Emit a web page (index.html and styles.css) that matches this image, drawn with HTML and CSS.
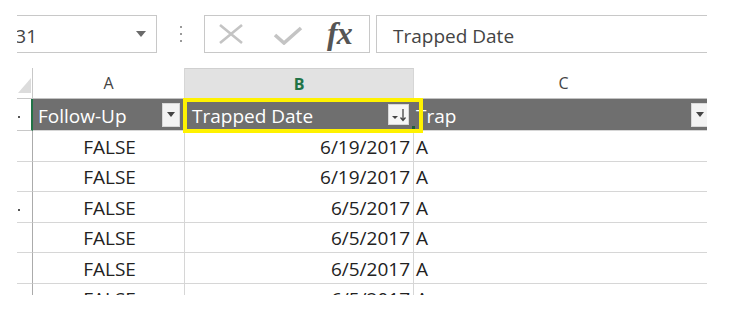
FILE: index.html
```html
<!DOCTYPE html>
<html lang="en">
<head>
    <meta charset="UTF-8">
    <meta name="viewport" content="width=device-width, initial-scale=1.0">
    <title>Trapped Date</title>
    <link rel="stylesheet" href="styles.css">
</head>
<body>
    <div class="shot">
        <!-- formula bar -->
        <div class="bar">
            <div class="namebox">
                <span>B31</span>
                <svg class="caret" width="10" height="6" viewBox="0 0 10 6"><path d="M0 0 L10 0 L5 6 Z" fill="#6a6a6a"/></svg>
            </div>
            <div class="grip"><i></i><i></i><i></i></div>
            <div class="fxbox">
                <svg class="cancel" width="26" height="22" viewBox="0 0 26 22"><path d="M2 2 L24 20 M24 2 L2 20" stroke="#c4c4c4" stroke-width="2.6" fill="none"/></svg>
                <svg class="enter" width="30" height="19" viewBox="0 0 30 19"><path d="M2 9 L11 17 L28 2" stroke="#c4c4c4" stroke-width="3.6" fill="none"/></svg>
                <span class="fx">fx</span>
            </div>
            <div class="formula">Trapped Date</div>
        </div>

        <!-- sheet -->
        <div class="sheet">
            <div class="corner"><svg width="13" height="15" viewBox="0 0 13 15"><path d="M13 0 L13 15 L0 15 Z" fill="#dcdcdc"/></svg></div>
            <div class="colhead">A</div>
            <div class="colhead sel">B</div>
            <div class="colhead">C</div>

            <div class="rowhead active"><i class="speck"></i></div>
            <div class="th pad-a"><span>Follow-Up</span><span class="filter"><svg width="8" height="5" viewBox="0 0 8 5"><path d="M0 0 L8 0 L4 5 Z" fill="#444"/></svg></span></div>
            <div class="th pad-b"><span>Trapped Date</span><span class="filter sort"><svg width="16" height="14" viewBox="0 0 16 14"><path d="M1 8 L7 8 L4 11 Z" fill="#444"/><path d="M12 1 L12 12 M9.5 9.5 L12 12.5 L14.5 9.5" stroke="#444" stroke-width="1.3" fill="none"/></svg></span></div>
            <div class="th pad-c"><span>Trap</span><span class="filter"><svg width="8" height="5" viewBox="0 0 8 5"><path d="M0 0 L8 0 L4 5 Z" fill="#444"/></svg></span></div>

            <div class="rowhead"></div>
            <div class="cell bool">FALSE</div>
            <div class="cell num">6/19/2017</div>
            <div class="cell txt">A</div>

            <div class="rowhead"></div>
            <div class="cell bool">FALSE</div>
            <div class="cell num">6/19/2017</div>
            <div class="cell txt">A</div>

            <div class="rowhead"><i class="speck"></i></div>
            <div class="cell bool">FALSE</div>
            <div class="cell num">6/5/2017</div>
            <div class="cell txt">A</div>

            <div class="rowhead"></div>
            <div class="cell bool">FALSE</div>
            <div class="cell num">6/5/2017</div>
            <div class="cell txt">A</div>

            <div class="rowhead"></div>
            <div class="cell bool">FALSE</div>
            <div class="cell num">6/5/2017</div>
            <div class="cell txt">A</div>

            <div class="rowhead"></div>
            <div class="cell bool">FALSE</div>
            <div class="cell num">6/5/2017</div>
            <div class="cell txt">A</div>

            <!-- yellow highlight over the selected header -->
            <div class="pick"><i class="handle"></i></div>
        </div>
    </div>
</body>
</html>
```

FILE: styles.css
```css
body{margin: 0; background: #fff; font-family: "Open Sans", "Liberation Sans", sans-serif; color: #222;}

.shot{margin: 8px 0 0 17px; width: 690px; height: 287px; overflow: hidden; position: relative;}

/* formula bar */
.bar{display: flex; align-items: center; margin-top: 7px; height: 38px;}
.bar > div{flex-shrink: 0;}
.namebox{box-sizing: border-box; width: 160px; height: 38px; margin-left: -20px; border: 1px solid #c8c8c8; display: flex; align-items: center; justify-content: space-between; padding: 4px 10px 0 5px; font-size: 19px; color: #444;}
.namebox .caret{margin-top: -4px;}
.grip{width: 47px; display: flex; flex-direction: column; align-items: center; gap: 5px;}
.grip i{display: block; width: 2px; height: 2px; background: #9a9a9a;}
.fxbox{box-sizing: border-box; width: 166px; height: 38px; border: 1px solid #c8c8c8; display: flex; align-items: center; padding-left: 13px;}
.fxbox .enter{margin-left: 29px; margin-top: 2px;}
.fxbox .fx{margin-left: 24px; font-family: "Liberation Serif", serif; font-style: italic; font-weight: 700; font-size: 32px; color: #555; line-height: 1; margin-top: -2px; letter-spacing: -1px;}
.formula{box-sizing: border-box; width: 345px; height: 38px; margin-left: 6px; border: 1px solid #c8c8c8; border-right: none; padding: 4px 0 0 16px; font-size: 19px; color: #444; display: flex; align-items: center;}

/* sheet */
.sheet{display: grid; grid-template-columns: 16px 152px 229px 300px; grid-template-rows: 31px 32px repeat(6, 30.5px); width: 697px; margin-top: 15px; position: relative;}
.sheet > div{box-sizing: border-box;}

.corner{display: flex; align-items: flex-end; padding: 0 0 5px 1px; border-right: 1px solid #c8c8c8; border-bottom: 1px solid #c8c8c8;}
.colhead{display: flex; align-items: center; justify-content: center; font-size: 16px; color: #444; border-right: 1px solid #d6d6d6; border-bottom: 1px solid #c2c2c2;}
.colhead.sel{background: #e2e2e2; color: #217346; font-weight: 700; border-top: 1px solid #d0d0d0; border-bottom: 1px solid #a9d8bd;}

.rowhead{border-right: 1px solid #ababab; border-bottom: 1px solid #d6d6d6; position: relative;}
.rowhead.active{border-right: 2px solid #217346; border-bottom-color: #c8c8c8;}
.speck{position: absolute; left: 1px; top: 17px; width: 2px; height: 2px; background: #555;}

.th{background: #6f6f6f; color: #fff; font-size: 19px; display: flex; align-items: center; justify-content: space-between; padding-right: 5px; border-bottom: 1px solid #d6d6d6;}
.th span:first-child{padding-top: 3px;}
.pad-a{padding-left: 5px;}
.pad-b{padding-left: 7px;}
.pad-c{padding-left: 2px;}
.filter{box-sizing: border-box; width: 18px; height: 24px; background: #f3f3f3; border: 1px solid #d8d8d8; display: flex; align-items: center; justify-content: center;}
.filter.sort{width: 21px; height: 21px; background: #f6f6f6;}

.cell{display: flex; align-items: center; font-size: 19px; color: #222; padding-top: 2px; border-right: 1px solid #d6d6d6; border-bottom: 1px solid #d6d6d6;}
.bool{justify-content: center; padding-left: 2px;}
.num{justify-content: flex-end; padding-right: 3px;}
.txt{padding-left: 2px;}

.pick{position: absolute; left: 166px; top: 30px; width: 240px; height: 35px; box-sizing: border-box; border: 4px solid #fff200;}
.handle{position: absolute; right: 4px; bottom: 0; width: 3px; height: 3px; background: #1f5c3a;}
```
